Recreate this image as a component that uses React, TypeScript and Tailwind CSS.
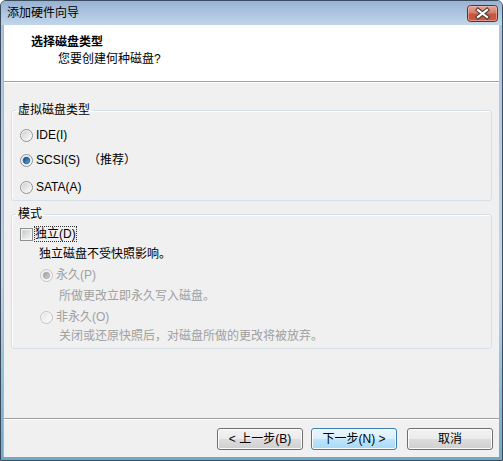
import React from "react";

function Radio({ checked = false, disabled = false }: { checked?: boolean; disabled?: boolean }) {
  const id = `r${checked ? 1 : 0}${disabled ? 1 : 0}`;
  return (
    <svg width="13" height="13" viewBox="0 0 13 13" className="shrink-0">
      <defs>
        <linearGradient id={id + "f"} x1="0" y1="0" x2="1" y2="1">
          <stop offset="0" stopColor={disabled ? "#e6e6e6" : "#cfcfcf"} />
          <stop offset="1" stopColor={disabled ? "#fbfbfb" : "#fcfcfc"} />
        </linearGradient>
        <linearGradient id={id + "d"} x1="0" y1="0" x2="1" y2="1">
          <stop offset="0" stopColor={disabled ? "#9a9a9a" : "#0f3f7a"} />
          <stop offset="1" stopColor={disabled ? "#d4d4d4" : "#5ab3ea"} />
        </linearGradient>
      </defs>
      <circle cx="6.5" cy="6.5" r="6" fill="#f6f6f6" stroke={disabled ? "#c4c4c4" : "#8e8f8f"} />
      <circle cx="6.5" cy="6.5" r="4.5" fill={`url(#${id}f)`} />
      {checked && (
        <circle cx="6.5" cy="6.5" r="3.2" fill={`url(#${id}d)`} stroke={disabled ? "#a8a8a8" : "#1b4e86"} strokeWidth="0.8" />
      )}
    </svg>
  );
}

function Checkbox() {
  return (
    <svg width="13" height="13" viewBox="0 0 13 13" className="shrink-0">
      <defs>
        <linearGradient id="cbx" x1="0" y1="0" x2="1" y2="1">
          <stop offset="0" stopColor="#c6c8cc" />
          <stop offset="1" stopColor="#f4f4f4" />
        </linearGradient>
      </defs>
      <rect x="0.5" y="0.5" width="12" height="12" fill="#f4f4f4" stroke="#8e8f8f" />
      <rect x="2" y="2" width="9" height="9" fill="url(#cbx)" stroke="#ffffff" strokeWidth="0.5" strokeOpacity="0.6" />
    </svg>
  );
}

function CloseButton() {
  return (
    <svg width="31" height="17" viewBox="0 0 31 17" className="shrink-0">
      <defs>
        <linearGradient id="closeg" x1="0" y1="0" x2="0" y2="1">
          <stop offset="0" stopColor="#e8a899" />
          <stop offset="0.45" stopColor="#d57e6b" />
          <stop offset="0.55" stopColor="#c4553f" />
          <stop offset="1" stopColor="#cc5a40" />
        </linearGradient>
      </defs>
      <rect x="0.5" y="0.5" width="30" height="16" rx="3" fill="url(#closeg)" stroke="#6b2a22" />
      <rect x="1.5" y="1.5" width="28" height="14" rx="2" fill="none" stroke="#f3c4b8" strokeOpacity="0.55" />
      <path d="M11 5 L20 12 M20 5 L11 12" stroke="#4a3a38" strokeWidth="4.2" strokeLinecap="square" />
      <path d="M11 5 L20 12 M20 5 L11 12" stroke="#ffffff" strokeWidth="2.2" strokeLinecap="square" />
    </svg>
  );
}

function Button({ children, def = false, className = "" }: { children: React.ReactNode; def?: boolean; className?: string }) {
  return (
    <div
      className={
        "w-[86px] h-[22px] rounded-[3px] border flex items-center justify-center text-[12px] leading-[16px] text-black shadow-[inset_0_0_0_1px_#fcfcfc] " +
        (def
          ? "border-[#3c7fb1] bg-[linear-gradient(to_bottom,#eaf6fd_0%,#d9f0fc_50%,#bee6fd_50%,#a7d9f5_100%)] "
          : "border-[#707070] bg-[linear-gradient(to_bottom,#f2f2f2_0%,#ebebeb_50%,#dddddd_50%,#cfcfcf_100%)] ") +
        className
      }
    >
      {children}
    </div>
  );
}

export default function App() {
  return (
    <div className="w-[503px] h-[461px] flex flex-col rounded-t-[6px] border border-[#3b4c5f] bg-[linear-gradient(to_bottom,#a9c2de,#c3d7ec_60%,#6fa8c8)] overflow-hidden font-['Liberation_Sans','Noto_Sans_CJK_SC',sans-serif] text-[12px] leading-[16px] text-black">
      {/* title bar */}
      <div className="h-[24px] shrink-0 flex items-center pl-[6px] pr-[4px] bg-[linear-gradient(to_bottom,#97b2d3,#c1d6eb)]">
        <span className="text-black">添加硬件向导</span>
        <div className="ml-auto flex">
          <CloseButton />
        </div>
      </div>

      {/* client */}
      <div className="flex-1 flex flex-col ml-[2px] mr-[3px] mb-[3px] bg-[#f0f0f0] border-l border-[#a7b6c6]">
        {/* header */}
        <div className="h-[57px] shrink-0 bg-white border-b border-[#a0a0a0] pt-[9px]">
          <div className="pl-[27px] font-bold">选择磁盘类型</div>
          <div className="pl-[54px] mt-[1px]">您要创建何种磁盘?</div>
        </div>

        {/* body */}
        <div className="flex-1 flex flex-col border-t border-white px-[7px] pt-[19px]">
          <fieldset className="border border-[#d5dfe5] rounded-[3px] pl-[4px] pr-0 pb-[5px] pt-0 m-0 shadow-[inset_1px_1px_0_#ffffff]">
            <legend className="px-[2px]">虚拟磁盘类型</legend>
            <div className="flex items-center ml-[4px] mt-[9px]">
              <Radio />
              <span className="ml-[3px]">IDE(I)</span>
            </div>
            <div className="flex items-center ml-[4px] mt-[9px]">
              <Radio checked />
              <span className="ml-[3px]">SCSI(S)</span>
              <span className="ml-[8px]">（推荐）</span>
            </div>
            <div className="flex items-center ml-[4px] mt-[11px]">
              <Radio />
              <span className="ml-[3px]">SATA(A)</span>
            </div>
          </fieldset>

          <fieldset className="mt-[5px] border border-[#d5dfe5] rounded-[3px] pl-[4px] pr-0 pb-[4px] pt-0 m-0 shadow-[inset_1px_1px_0_#ffffff]">
            <legend className="px-[2px]">模式</legend>
            <div className="flex items-center ml-[4px] mt-[4px] h-[16px]">
              <Checkbox />
              <span className="ml-[1px] border border-dotted border-[#333] leading-[14px]">独立(D)</span>
            </div>
            <div className="ml-[23px] mt-[4px]">独立磁盘不受快照影响。</div>
            <div className="flex items-center ml-[24px] mt-[5px] text-[#a0a0a0]">
              <Radio checked disabled />
              <span className="ml-[3px]">永久(P)</span>
            </div>
            <div className="ml-[43px] mt-[5px] text-[#a0a0a0]">所做更改立即永久写入磁盘。</div>
            <div className="flex items-center ml-[24px] mt-[5px] text-[#a0a0a0]">
              <Radio disabled />
              <span className="ml-[3px]">非永久(O)</span>
            </div>
            <div className="ml-[43px] mt-[3px] text-[#a0a0a0]">关闭或还原快照后，对磁盘所做的更改将被放弃。</div>
          </fieldset>

          <div className="flex-1" />
        </div>

        {/* footer */}
        <div className="shrink-0 border-t border-[#a0a0a0] shadow-[inset_0_1px_0_#ffffff] pt-[9px] pb-[7px] pr-[6px] flex justify-end">
          <Button>&lt; 上一步(B)</Button>
          <Button def className="ml-[8px]">下一步(N) &gt;</Button>
          <Button className="ml-[10px]">取消</Button>
        </div>
      </div>
    </div>
  );
}
